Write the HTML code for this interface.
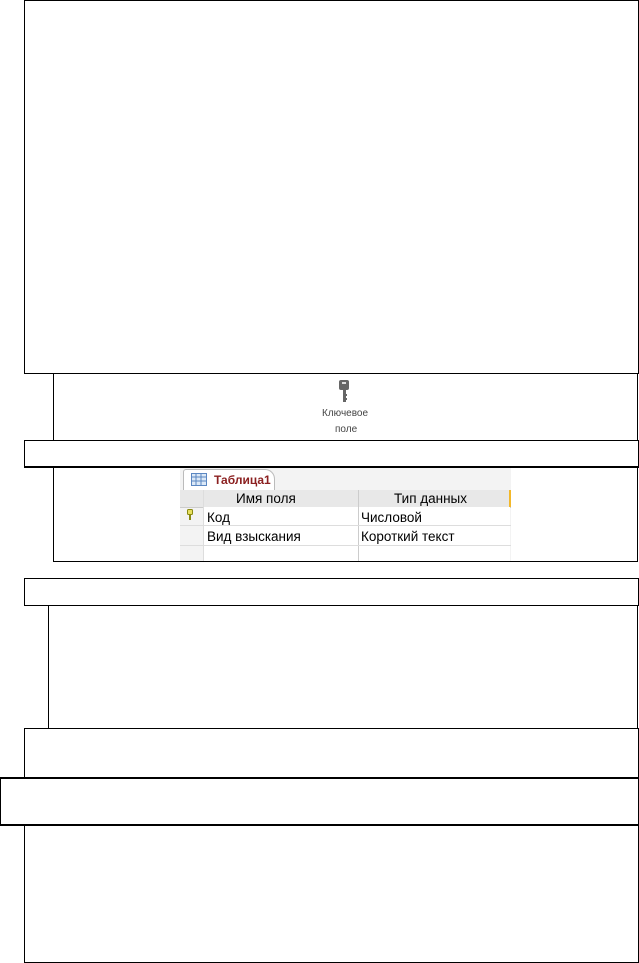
<!DOCTYPE html>
<html><head><meta charset="utf-8"><style>
body{margin:0;width:639px;height:963px;background:#fff;position:relative;overflow:hidden;font-family:"Liberation Sans",sans-serif}
.b{position:absolute;border:1px solid #000;box-sizing:border-box}
.l{position:absolute;background:#000}
.t{position:absolute;font-size:13.5px;color:#000;white-space:nowrap}
</style></head><body>
<div class="b" style="left:24px;top:0;width:615px;height:374px"></div>
<div class="l" style="left:53px;top:373px;width:1px;height:68px"></div>
<div class="l" style="left:637px;top:373px;width:1px;height:68px"></div>
<div class="b" style="left:24px;top:440px;width:615px;height:28px;border-bottom-width:2px"></div>
<div class="l" style="left:53px;top:466px;width:1px;height:96px"></div>
<div class="l" style="left:637px;top:466px;width:1px;height:96px"></div>
<div class="l" style="left:53px;top:561px;width:585px;height:1px"></div>
<svg style="position:absolute;left:338px;top:380px" width="12" height="24" viewBox="0 0 12 24"><rect x="1" y="0" width="10" height="10" rx="2" fill="#666"/><rect x="4" y="2" width="4" height="2" fill="#ddd"/><rect x="5" y="9" width="3" height="13" fill="#666"/><rect x="7" y="14" width="2" height="2" fill="#666"/><rect x="7" y="18" width="2" height="2" fill="#666"/></svg>
<div class="t" style="left:322px;top:408px;font-size:10px;color:#444">Ключевое</div>
<div class="t" style="left:335px;top:424px;font-size:10px;color:#444">поле</div>
<div style="position:absolute;left:180px;top:468px;width:331px;height:93px;background:#f3f3f3"></div>
<div style="position:absolute;left:183px;top:469px;width:90px;height:22px;background:#fff;border:1px solid #bbb;border-bottom:none;border-radius:3px 10px 0 0"></div>
<svg style="position:absolute;left:191px;top:473px" width="16" height="13"><rect x="0.5" y="0.5" width="15" height="12" fill="#dce9f7" stroke="#5b87c2"/><line x1="0" y1="4" x2="16" y2="4" stroke="#5b87c2"/><line x1="0" y1="8" x2="16" y2="8" stroke="#5b87c2"/><line x1="5" y1="0" x2="5" y2="13" stroke="#5b87c2"/><line x1="10" y1="0" x2="10" y2="13" stroke="#5b87c2"/></svg>
<div class="t" style="left:214px;top:473px;font-size:12px;font-weight:bold;color:#8b2020">Таблица1</div>
<div style="position:absolute;left:180px;top:490px;width:331px;height:17px;background:#e8e8e8;border-bottom:1px solid #ccc"></div>
<div style="position:absolute;left:203px;top:507px;width:307px;height:54px;background:#fff"></div>
<div class="l" style="left:358px;top:490px;width:1px;height:71px;background:#ccc"></div>
<div class="l" style="left:203px;top:490px;width:1px;height:71px;background:#ddd"></div>
<div class="l" style="left:509px;top:490px;width:2px;height:17px;background:#f3b82a"></div>
<div class="l" style="left:180px;top:525px;width:331px;height:1px;background:#ddd"></div>
<div class="l" style="left:180px;top:545px;width:331px;height:1px;background:#ddd"></div>
<div class="t" style="left:236px;top:491px">Имя поля</div>
<div class="t" style="left:394px;top:491px">Тип данных</div>
<svg style="position:absolute;left:187px;top:509px" width="6" height="12" viewBox="0 0 6 12"><rect x="0.5" y="0.5" width="5" height="5" rx="1" fill="#e8e060" stroke="#8a8a10"/><rect x="2" y="5" width="2" height="6" fill="#8a8a10"/></svg>
<div class="t" style="left:207px;top:510px">Код</div>
<div class="t" style="left:361px;top:510px">Числовой</div>
<div class="t" style="left:207px;top:529px">Вид взыскания</div>
<div class="t" style="left:361px;top:529px">Короткий текст</div>
<div class="b" style="left:24px;top:578px;width:615px;height:28px"></div>
<div class="l" style="left:48px;top:605px;width:1px;height:124px"></div>
<div class="l" style="left:637px;top:605px;width:1px;height:124px"></div>
<div class="b" style="left:24px;top:728px;width:615px;height:50px"></div>
<div class="b" style="left:0;top:777px;width:639px;height:49px;border-width:2px 1px 2px 1px"></div>
<div class="b" style="left:24px;top:825px;width:615px;height:138px"></div>
</body></html>
